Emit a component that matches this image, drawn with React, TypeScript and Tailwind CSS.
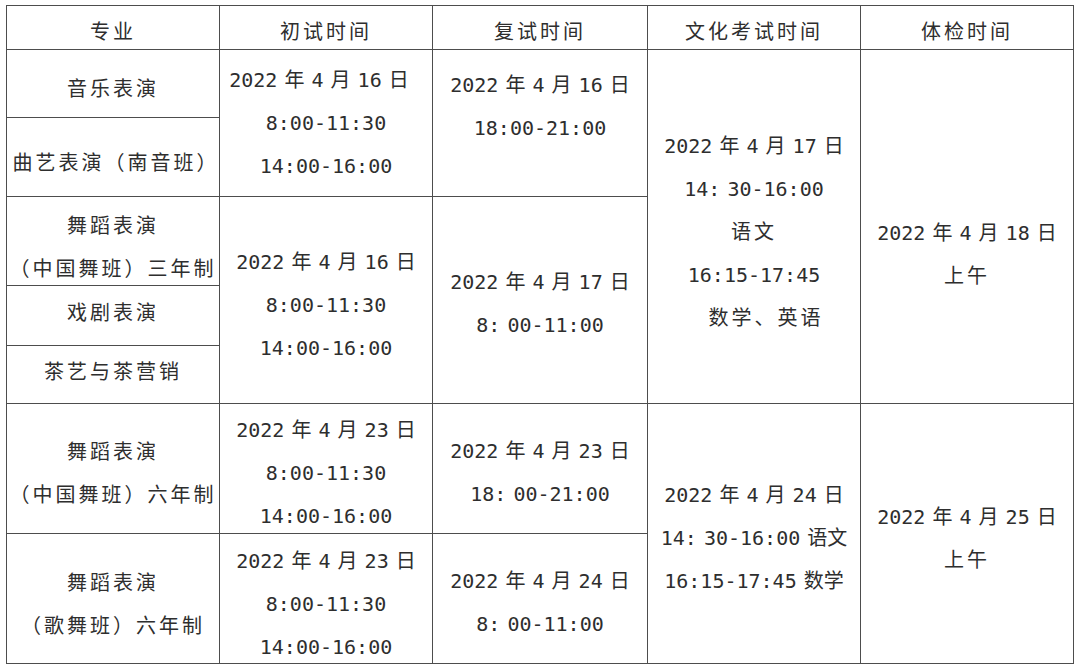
import React from "react";

// one line of text inside a cell; cjk lines get the wider tracking of the scan
type Line = { t: string; cjk?: boolean; cls?: string };
type CellDef = { pos: string; pad?: string; lines: Line[]; top?: boolean };

const date = (d: string): Line => ({ t: `2022 年 4 月 ${d} 日` });

const cells: CellDef[] = [
    // header
    { pos: "col-start-1 row-start-1", pad: "pt-[10px]", lines: [{ t: "专业", cjk: true }] },
    { pos: "col-start-2 row-start-1", pad: "pt-[10px]", lines: [{ t: "初试时间", cjk: true }] },
    { pos: "col-start-3 row-start-1", pad: "pt-[10px]", lines: [{ t: "复试时间", cjk: true }] },
    { pos: "col-start-4 row-start-1", pad: "pt-[10px]", lines: [{ t: "文化考试时间", cjk: true }] },
    { pos: "col-start-5 row-start-1", pad: "pt-[10px]", lines: [{ t: "体检时间", cjk: true }] },

    // 专业 column
    { pos: "col-start-1 row-start-2", pad: "pt-[12px]", lines: [{ t: "音乐表演", cjk: true }] },
    { pos: "col-start-1 row-start-3", pad: "pt-[12px]", lines: [{ t: "曲艺表演（南音班）", cjk: true, cls: "tracking-[1px] pl-[6px]" }] },
    { pos: "col-start-1 row-start-4", pad: "pt-[13px]", lines: [{ t: "舞蹈表演", cjk: true }, { t: "（中国舞班）三年制", cjk: true, cls: "tracking-[1px]" }] },
    { pos: "col-start-1 row-start-5", pad: "pb-[4px]", lines: [{ t: "戏剧表演", cjk: true }] },
    { pos: "col-start-1 row-start-6", pad: "pb-[4px]", lines: [{ t: "茶艺与茶营销", cjk: true }] },
    { pos: "col-start-1 row-start-7", pad: "pt-[11px]", lines: [{ t: "舞蹈表演", cjk: true }, { t: "（中国舞班）六年制", cjk: true, cls: "tracking-[1px]" }] },
    { pos: "col-start-1 row-start-8", pad: "pt-[13px]", lines: [{ t: "舞蹈表演", cjk: true }, { t: "（歌舞班）六年制", cjk: true }] },

    // 初试时间
    { pos: "col-start-2 row-start-2 row-span-2", lines: [{ ...date("16"), cls: "pr-[14px]" }, { t: "8:00-11:30" }, { t: "14:00-16:00" }] },
    { pos: "col-start-2 row-start-4 row-span-3", pad: "pt-[10px]", lines: [date("16"), { t: "8:00-11:30" }, { t: "14:00-16:00" }] },
    { pos: "col-start-2 row-start-7", pad: "pt-[9px]", lines: [date("23"), { t: "8:00-11:30" }, { t: "14:00-16:00" }] },
    { pos: "col-start-2 row-start-8", pad: "pt-[11px]", lines: [date("23"), { t: "8:00-11:30" }, { t: "14:00-16:00" }] },

    // 复试时间
    { pos: "col-start-3 row-start-2 row-span-2", pad: "pt-[14px]", top: true, lines: [date("16"), { t: "18:00-21:00" }] },
    { pos: "col-start-3 row-start-4 row-span-3", pad: "pt-[8px]", lines: [date("17"), { t: "8: 00-11:00" }] },
    { pos: "col-start-3 row-start-7", pad: "pt-[8px]", lines: [date("23"), { t: "18: 00-21:00" }] },
    { pos: "col-start-3 row-start-8", pad: "pt-[8px]", lines: [date("24"), { t: "8: 00-11:00" }] },

    // 文化考试时间
    {
        pos: "col-start-4 row-start-2 row-span-5", pad: "pt-[12px]",
        lines: [date("17"), { t: "14: 30-16:00" }, { t: "语文", cjk: true }, { t: "16:15-17:45" }, { t: "数学、英语", cjk: true, cls: "pl-[24px]" }],
    },
    { pos: "col-start-4 row-start-7 row-span-2", pad: "pt-[9px]", lines: [date("24"), { t: "14: 30-16:00 语文" }, { t: "16:15-17:45 数学" }] },

    // 体检时间
    { pos: "col-start-5 row-start-2 row-span-5", pad: "pt-[56px]", lines: [date("18"), { t: "上午", cjk: true }] },
    { pos: "col-start-5 row-start-7 row-span-2", pad: "pt-[11px]", lines: [date("25"), { t: "上午", cjk: true }] },
];

function Cell({ c }: { c: CellDef }) {
    return (
        <div className={`${c.pos} ${c.pad ?? ""} flex flex-col items-center ${c.top ? "justify-start" : "justify-center"} border-r border-b border-[#4d4d4d]`}>
            {c.lines.map((l, i) => (
                <p key={i} className={`whitespace-pre leading-[43px] ${l.cjk ? "tracking-[3px]" : ""} ${l.cls ?? ""}`}>{l.t}</p>
            ))}
        </div>
    );
}

export default function App() {
    return (
        <div className="h-[666px] w-[1080px] bg-white pl-[6px] pt-[5px] font-['DejaVu_Sans_Mono','Noto_Sans_CJK_SC',monospace] text-[20px] text-[#2e2e2e] [word-spacing:-5px]">
            <div className="grid w-max grid-cols-[213px_213px_215px_213px_213px] grid-rows-[44px_68px_79px_89px_60px_58px_130px_130px] border-t border-l border-[#4d4d4d]">
                {cells.map((c, i) => <Cell key={i} c={c} />)}
            </div>
        </div>
    );
}
